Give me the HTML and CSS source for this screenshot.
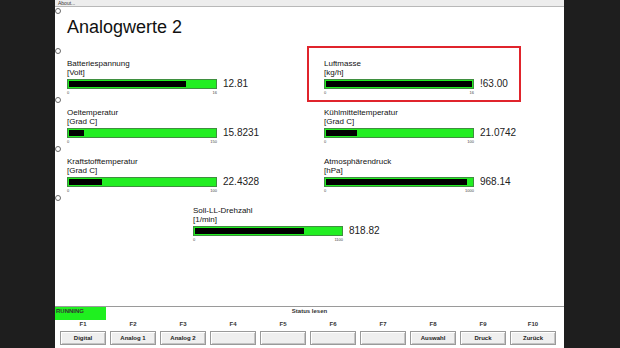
FILE: index.html
```html
<!DOCTYPE html>
<html lang="de">
<head>
  <meta charset="UTF-8">
  <meta name="viewport" content="width=device-width, initial-scale=1.0">
  <title>Analogwerte 2</title>
  <link rel="stylesheet" href="styles.css">
</head>
<body>
  <div class="app">
    <div class="menubar">About...</div>

    <div class="main">
      <div class="row title-row">
        <span class="radio"></span>
        <h1>Analogwerte 2</h1>
      </div>

      <div class="row">
        <span class="radio"></span>
        <div class="cells">
          <div class="gauge">
            <div class="label">Batteriespannung</div>
            <div class="unit">[Volt]</div>
            <div class="bar-line">
              <div class="bar"><div class="fill" style="width: 80%"></div></div>
              <span class="value">12.81</span>
            </div>
            <div class="scale"><span>0</span><span>16</span></div>
          </div>
          <div class="gauge marked">
            <div class="label">Luftmasse</div>
            <div class="unit">[kg/h]</div>
            <div class="bar-line">
              <div class="bar"><div class="fill" style="width: 100%"></div></div>
              <span class="value">!63.00</span>
            </div>
            <div class="scale"><span>0</span><span>16</span></div>
          </div>
        </div>
      </div>

      <div class="row">
        <span class="radio"></span>
        <div class="cells">
          <div class="gauge">
            <div class="label">Oeltemperatur</div>
            <div class="unit">[Grad C]</div>
            <div class="bar-line">
              <div class="bar"><div class="fill" style="width: 10.5%"></div></div>
              <span class="value">15.8231</span>
            </div>
            <div class="scale"><span>0</span><span>150</span></div>
          </div>
          <div class="gauge">
            <div class="label">Kühlmitteltemperatur</div>
            <div class="unit">[Grad C]</div>
            <div class="bar-line">
              <div class="bar"><div class="fill" style="width: 21.1%"></div></div>
              <span class="value">21.0742</span>
            </div>
            <div class="scale"><span>0</span><span>100</span></div>
          </div>
        </div>
      </div>

      <div class="row">
        <span class="radio"></span>
        <div class="cells">
          <div class="gauge">
            <div class="label">Kraftstofftemperatur</div>
            <div class="unit">[Grad C]</div>
            <div class="bar-line">
              <div class="bar"><div class="fill" style="width: 22.4%"></div></div>
              <span class="value">22.4328</span>
            </div>
            <div class="scale"><span>0</span><span>100</span></div>
          </div>
          <div class="gauge">
            <div class="label">Atmosphärendruck</div>
            <div class="unit">[hPa]</div>
            <div class="bar-line">
              <div class="bar"><div class="fill" style="width: 96.8%"></div></div>
              <span class="value">968.14</span>
            </div>
            <div class="scale"><span>0</span><span>1000</span></div>
          </div>
        </div>
      </div>

      <div class="row">
        <span class="radio"></span>
        <div class="cells single">
          <div class="gauge">
            <div class="label">Soll-LL-Drehzahl</div>
            <div class="unit">[1/min]</div>
            <div class="bar-line">
              <div class="bar"><div class="fill" style="width: 74.4%"></div></div>
              <span class="value">818.82</span>
            </div>
            <div class="scale"><span>0</span><span>1100</span></div>
          </div>
        </div>
      </div>
    </div>

    <div class="footer">
      <div class="status">
        <div class="running">RUNNING</div>
        <div class="status-title">Status lesen</div>
        <div></div>
      </div>
      <div class="keys">
        <div class="key"><span class="fkey">F1</span><button class="btn">Digital</button></div>
        <div class="key"><span class="fkey">F2</span><button class="btn">Analog 1</button></div>
        <div class="key"><span class="fkey">F3</span><button class="btn">Analog 2</button></div>
        <div class="key"><span class="fkey">F4</span><button class="btn"></button></div>
        <div class="key"><span class="fkey">F5</span><button class="btn"></button></div>
        <div class="key"><span class="fkey">F6</span><button class="btn"></button></div>
        <div class="key"><span class="fkey">F7</span><button class="btn"></button></div>
        <div class="key"><span class="fkey">F8</span><button class="btn">Auswahl</button></div>
        <div class="key"><span class="fkey">F9</span><button class="btn">Druck</button></div>
        <div class="key"><span class="fkey">F10</span><button class="btn">Zurück</button></div>
      </div>
    </div>
  </div>
</body>
</html>
```

FILE: styles.css
```css
body {
  margin: 0;
  background: #1e1e1e;
  font-family: "Liberation Sans", Arial, sans-serif;
}
.app {
  width: 509px;
  height: 348px;
  margin-left: 55px;
  background: #fff;
  display: flex;
  flex-direction: column;
}
.menubar {
  height: 6px;
  border-bottom: 1px solid #b8b8b8;
  background: #ededed;
  font-size: 5px;
  line-height: 6px;
  padding-left: 3px;
  color: #333;
}
.main {
  flex: 1;
}
.row {
  display: flex;
  height: 49px;
}
.title-row {
  height: 40px;
}
.radio {
  flex: none;
  width: 6px;
  height: 6px;
  box-sizing: border-box;
  border: 1px solid #6a6a6a;
  border-radius: 50%;
  margin: 1px 6px 0 0;
}
h1 {
  margin: 10px 0 0;
  font-size: 18px;
  line-height: 20px;
  font-weight: normal;
  color: #111;
}
.cells {
  display: flex;
  padding-top: 12px;
}
.cells.single {
  padding-left: 126px;
}
.gauge {
  width: 257px;
}
.gauge.marked {
  position: relative;
}
.gauge.marked::after {
  content: "";
  position: absolute;
  left: -17px;
  top: -13px;
  width: 214px;
  height: 56px;
  box-sizing: border-box;
  border: 2px solid #e0242c;
}
.label, .unit {
  font-size: 8px;
  line-height: 9px;
  color: #111;
}
.bar-line {
  display: flex;
  align-items: center;
  margin-top: 2px;
}
.bar {
  width: 150px;
  height: 10px;
  box-sizing: border-box;
  border: 1px solid #3f8f3f;
  background: #22ee22;
  padding: 1px;
}
.fill {
  height: 100%;
  background: #000;
}
.value {
  margin-left: 6px;
  font-size: 10px;
  line-height: 10px;
  color: #222;
}
.scale {
  width: 150px;
  display: flex;
  justify-content: space-between;
  font-size: 4px;
  line-height: 5px;
  margin-top: 1px;
  color: #444;
}
.footer {
  height: 41px;
  border-top: 1px solid #9a9a9a;
}
.status {
  display: grid;
  grid-template-columns: 51px 1fr 51px;
  height: 13px;
  font-size: 6px;
  font-weight: bold;
  line-height: 8px;
  color: #333;
}
.running {
  background: #1ff01f;
  padding-left: 1px;
}
.status-title {
  text-align: center;
}
.keys {
  display: grid;
  grid-template-columns: repeat(10, 50px);
  padding-left: 3px;
}
.key {
  display: flex;
  flex-direction: column;
  align-items: center;
}
.fkey {
  height: 9px;
  margin-bottom: 2px;
  font-size: 6px;
  font-weight: bold;
  line-height: 9px;
  color: #333;
}
.btn {
  width: 46px;
  height: 14px;
  box-sizing: border-box;
  padding: 0;
  background: #efefef;
  border: 1px solid #9a9a9a;
  box-shadow: inset 1px 1px 0 #fff, inset -1px -1px 0 #c4c4c4;
  font-family: "Liberation Sans", Arial, sans-serif;
  font-size: 6px;
  font-weight: bold;
  line-height: 12px;
  color: #222;
}
```
